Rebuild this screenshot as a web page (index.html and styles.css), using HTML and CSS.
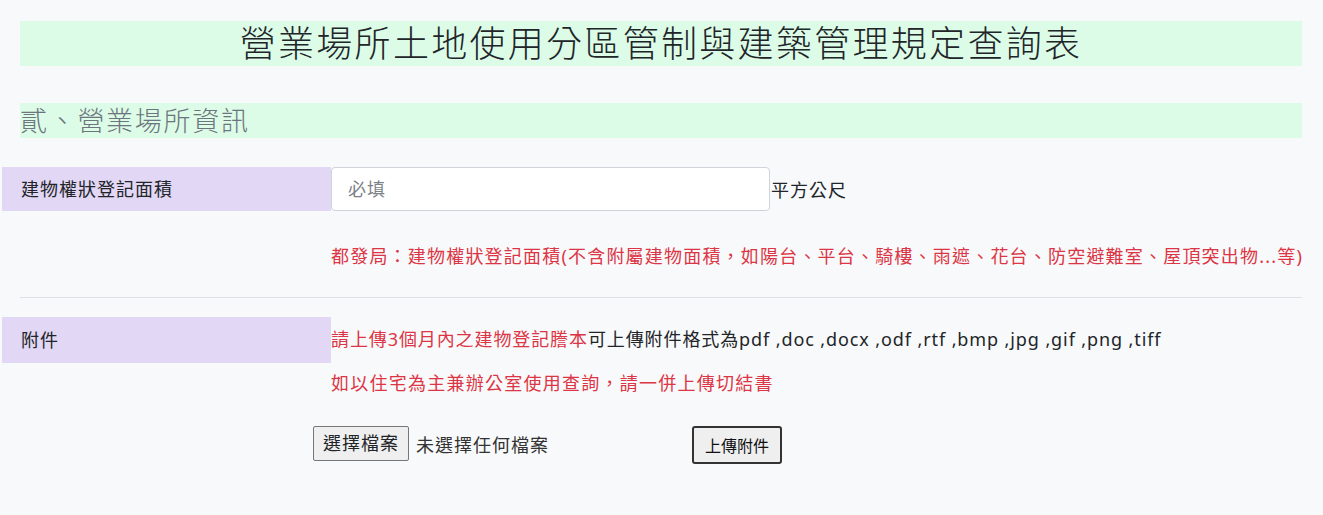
FILE: index.html
```html
<!DOCTYPE html>
<html lang="zh-Hant">
<head>
    <meta charset="UTF-8">
    <meta name="viewport" content="width=device-width, initial-scale=1.0">
    <title>營業場所土地使用分區管制與建築管理規定查詢表</title>
    <link rel="stylesheet" href="styles.css">
</head>
<body>
    <div class="page">
        <h1 class="title-bar">營業場所土地使用分區管制與建築管理規定查詢表</h1>
        <h2 class="section-bar">貳、營業場所資訊</h2>

        <div class="form-row">
            <div class="row-label">建物權狀登記面積</div>
            <input class="area-input" type="text" placeholder="必填">
            <span class="unit">平方公尺</span>
        </div>
        <p class="note">都發局：建物權狀登記面積(不含附屬建物面積，如陽台、平台、騎樓、雨遮、花台、防空避難室、屋頂突出物...等)</p>

        <hr class="divider">

        <div class="form-row attach-row">
            <div class="row-label">附件</div>
            <div class="attach-info">
                <p class="attach-line"><span class="red">請上傳3個月內之建物登記謄本</span>可上傳附件格式為pdf ,doc ,docx ,odf ,rtf ,bmp ,jpg ,gif ,png ,tiff</p>
                <p class="attach-line red wide">如以住宅為主兼辦公室使用查詢，請一併上傳切結書</p>
            </div>
        </div>

        <div class="upload-row">
            <label class="file-picker">
                <input type="file" class="file-hidden">
                <span class="file-btn">選擇檔案</span>
                <span class="file-name">未選擇任何檔案</span>
            </label>
            <button class="upload-btn" type="button">上傳附件</button>
        </div>
    </div>
</body>
</html>
```

FILE: styles.css
```css
body {
    margin: 0;
    background-color: #f8f9fa;
    color: #212529;
    font-family: "Noto Sans", "Noto Sans CJK TC", sans-serif;
}
.page {
    padding: 21px 21px 0 20px;
}
.title-bar {
    margin: 0 0 37px;
    height: 45px;
    line-height: 45px;
    background: #dcfce7;
    text-align: center;
    font-size: 36px;
    font-weight: 300;
    letter-spacing: 2.3px;
    color: #212529;
}
.section-bar {
    margin: 0 0 29px;
    height: 35px;
    line-height: 35px;
    background: #dcfce7;
    font-size: 27px;
    font-weight: 300;
    letter-spacing: 1.7px;
    color: #6c757d;
}
.form-row {
    display: flex;
    align-items: center;
    margin: 0 -19px 0 -18px;
    font-size: 18px;
    letter-spacing: 1px;
}
.row-label {
    width: 310px;
    height: 44px;
    line-height: 44px;
    padding-left: 19px;
    background: #e2d7f4;
    flex-shrink: 0;
}
.area-input {
    width: 439px;
    height: 44px;
    box-sizing: border-box;
    padding: 0 16px;
    border: 1px solid #ced4da;
    border-radius: 4px;
    background: #fff;
    font: inherit;
    letter-spacing: 1px;
    color: #212529;
}
.area-input::placeholder {
    color: #7b8289;
}
.unit {
    margin-left: 1px;
}
.note {
    margin: 33px 0 0 311px;
    font-size: 18px;
    letter-spacing: 1.2px;
    line-height: 24px;
    color: #dc3545;
    white-space: nowrap;
}
.divider {
    margin: 29px 0 19px;
    border: 0;
    border-top: 1px solid #dee2e6;
}
.attach-row {
    align-items: flex-start;
}
.attach-row .row-label {
    height: 46px;
    line-height: 46px;
}
.attach-info {
    padding-top: 10px;
}
.attach-line {
    margin: 0 0 20px;
    line-height: 24px;
    white-space: nowrap;
    letter-spacing: 0.9px;
}
.attach-line.wide {
    letter-spacing: 1.25px;
}
.red {
    color: #dc3545;
}
.upload-row {
    display: flex;
    align-items: flex-start;
    margin-top: 11px;
    padding-left: 293px;
}
.file-picker {
    display: flex;
    align-items: center;
    width: 379px;
    cursor: pointer;
}
.file-hidden {
    display: none;
}
.file-btn {
    height: 35px;
    line-height: 33px;
    box-sizing: border-box;
    padding: 0 9px;
    border: 1px solid #767676;
    border-radius: 2px;
    background: #efefef;
    font-size: 18px;
    letter-spacing: 1px;
}
.file-name {
    margin-left: 7px;
    font-size: 18px;
    letter-spacing: 1px;
    color: #333;
}
.upload-btn {
    width: 90px;
    height: 38px;
    border: 2px solid #333;
    border-radius: 3px;
    background: #efefef;
    font-family: "Noto Sans CJK TC", sans-serif;
    font-size: 16px;
    color: #111;
    cursor: pointer;
}
```
